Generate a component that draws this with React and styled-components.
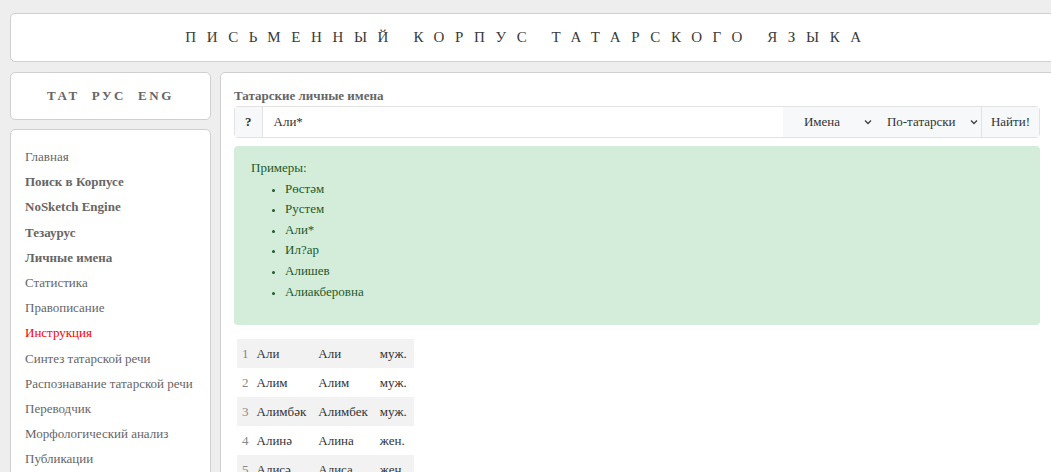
import React from "react";
import styled, { createGlobalStyle } from "styled-components";

const serif = `"Liberation Serif", "Times New Roman", "DejaVu Serif", serif`;

const GlobalStyle = createGlobalStyle`
  body {
    margin: 0;
    background: #eeeeee;
    font-family: ${serif};
    overflow: hidden;
  }
`;

const Page = styled.div`
  width: 1064px;
  height: 472px;
  overflow: hidden;
  box-sizing: border-box;
  padding: 13px 9px 0 10px;
  font-family: ${serif};
`;

const Header = styled.header`
  height: 49px;
  box-sizing: border-box;
  display: flex;
  align-items: center;
  justify-content: center;
  padding-right: 8px;
  background: #fff;
  border: 1px solid #cfcfcf;
  border-radius: 5px;
  font-size: 15px;
  letter-spacing: 10.6px;
  color: #3a3a3a;
`;

const Layout = styled.div`
  display: grid;
  grid-template-columns: 201px 1fr;
  gap: 9px;
  margin-top: 10px;
`;

const Sidebar = styled.aside`
  display: flex;
  flex-direction: column;
  gap: 9px;
`;

const Box = styled.div`
  background: #fff;
  border: 1px solid #cfcfcf;
  border-radius: 5px;
  box-sizing: border-box;
`;

const LangBox = styled(Box)`
  height: 48px;
  display: flex;
  align-items: center;
  justify-content: center;
  gap: 12px;
  font-size: 13px;
  font-weight: bold;
  letter-spacing: 2.6px;
  color: #666;
`;

const Menu = styled(Box)`
  padding: 14px 14px;
  min-height: 400px;
  display: flex;
  flex-direction: column;
`;

const NavItem = styled.a`
  font-size: 13px;
  line-height: 25.2px;
  text-decoration: none;
  white-space: nowrap;
  color: ${(p) => (p.$active ? "#ff0000" : "#666")};
  font-weight: ${(p) => (p.$bold ? "bold" : "normal")};
`;

const Main = styled(Box)`
  min-height: 420px;
  padding: 13px 14px 0 13px;
`;

const Title = styled.div`
  font-size: 13px;
  line-height: 20px;
  font-weight: bold;
  color: #666;
`;

const InputGroup = styled.div`
  display: flex;
  height: 32px;
  border: 1px solid #e2e2e2;
  border-radius: 4px;
  box-sizing: border-box;
  font-size: 13px;
  color: #333;
`;

const Addon = styled.div`
  display: flex;
  align-items: center;
  padding: 0 ${(p) => p.$pad ?? 10}px;
  background: #f7f8f9;
  font-weight: ${(p) => (p.$bold ? "bold" : "normal")};
  border-left: ${(p) => (p.$divider ? "1px solid #e2e2e2" : "none")};
  border-right: ${(p) => (p.$right ? "1px solid #e2e2e2" : "none")};
`;

const Field = styled.div`
  flex: 1;
  display: flex;
  align-items: center;
  padding-left: 11px;
`;

const Select = styled.div`
  display: flex;
  align-items: center;
  width: ${(p) => p.$w}px;
  padding-left: ${(p) => p.$pl}px;
  box-sizing: border-box;
  gap: ${(p) => p.$gap}px;
`;

const Chevron = () => (
  <svg width="8" height="6" viewBox="0 0 8 6">
    <path d="M1 1.5 L4 4.5 L7 1.5" fill="none" stroke="#444" strokeWidth="1.4" />
  </svg>
);

const Alert = styled.div`
  margin-top: 8px;
  height: 179px;
  box-sizing: border-box;
  padding: 12px 17px;
  background: #d4edda;
  border-radius: 4px;
  color: #1e5a2b;
  font-size: 13px;
  line-height: 20.6px;
`;

const Examples = styled.ul`
  margin: 0;
  padding-left: 34px;
  li::marker {
    font-size: 11px;
  }
`;

const Table = styled.table`
  margin: 14px 0 0 3px;
  border-collapse: collapse;
  font-size: 13px;
  color: #333;
`;

const Row = styled.tr`
  height: 29px;
  background: ${(p) => (p.$odd ? "#f2f2f2" : "#fff")};
`;

const Cell = styled.td`
  padding: 0 ${(p) => p.$pr ?? 6}px 0 ${(p) => p.$pl ?? 6}px;
  color: ${(p) => (p.$muted ? "#888" : "#333")};
  white-space: nowrap;
`;

const menu = [
  { t: "Главная" },
  { t: "Поиск в Корпусе", b: true },
  { t: "NoSketch Engine", b: true },
  { t: "Тезаурус", b: true },
  { t: "Личные имена", b: true },
  { t: "Статистика" },
  { t: "Правописание" },
  { t: "Инструкция", a: true },
  { t: "Синтез татарской речи" },
  { t: "Распознавание татарской речи" },
  { t: "Переводчик" },
  { t: "Морфологический анализ" },
  { t: "Публикации" },
];

const examples = ["Рөстәм", "Рустем", "Али*", "Ил?ар", "Алишев", "Алиакберовна"];

const names = [
  ["Али", "Али", "муж."],
  ["Алим", "Алим", "муж."],
  ["Алимбәк", "Алимбек", "муж."],
  ["Алинә", "Алина", "жен."],
  ["Алисә", "Алиса", "жен."],
];

export default function App() {
  return (
    <Page>
      <GlobalStyle />
      <Header>ПИСЬМЕННЫЙ КОРПУС ТАТАРСКОГО ЯЗЫКА</Header>
      <Layout>
        <Sidebar>
          <LangBox>
            <span>ТАТ</span>
            <span>РУС</span>
            <span>ENG</span>
          </LangBox>
          <Menu>
            {menu.map((m) => (
              <NavItem key={m.t} href="#" $bold={m.b} $active={m.a}>
                {m.t}
              </NavItem>
            ))}
          </Menu>
        </Sidebar>
        <Main>
          <Title>Татарские личные имена</Title>
          <InputGroup>
            <Addon $bold $right>?</Addon>
            <Field>Али*</Field>
            <Addon $pad={0}>
              <Select $w={93} $pl={21} $gap={24}>
                Имена <Chevron />
              </Select>
              <Select $w={105} $pl={11} $gap={14}>
                По-татарски <Chevron />
              </Select>
            </Addon>
            <Addon $divider $pad={9}>Найти!</Addon>
          </InputGroup>
          <Alert>
            Примеры:
            <Examples>
              {examples.map((e) => (
                <li key={e}>{e}</li>
              ))}
            </Examples>
          </Alert>
          <Table>
            <tbody>
              {names.map((n, i) => (
                <Row key={n[0]} $odd={i % 2 === 0}>
                  <Cell $muted $pl={5} $pr={4}>{i + 1}</Cell>
                  <Cell $pl={4}>{n[0]}</Cell>
                  <Cell>{n[1]}</Cell>
                  <Cell $pr={7}>{n[2]}</Cell>
                </Row>
              ))}
            </tbody>
          </Table>
        </Main>
      </Layout>
    </Page>
  );
}
